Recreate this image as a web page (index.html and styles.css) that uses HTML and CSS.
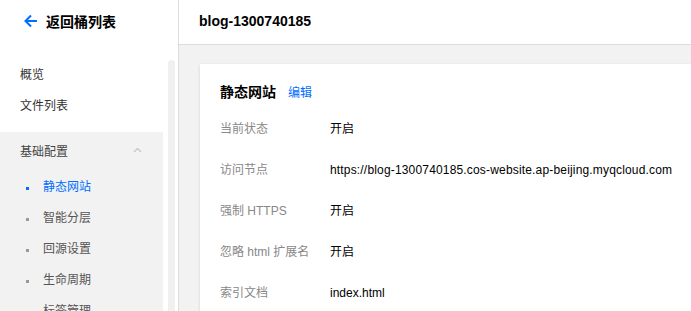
FILE: index.html
```html
<!doctype html>
<html lang="zh-CN">
  <head>
    <meta charset="UTF-8" />
    <title>blog-1300740185 - 静态网站</title>
    <link rel="stylesheet" href="styles.css">
  </head>
  <body>
    <!-- Sidebar -->
    <aside class="sidebar">
      <div class="side-head">
        <a class="back-link" href="#">
          <svg class="back-icon" width="14" height="14" viewBox="0 0 14 14" fill="none">
            <path d="M13 7H2M7 1.5L1.5 7L7 12.5" stroke="#006eff" stroke-width="2" stroke-linejoin="miter"/>
          </svg>
          <span>返回桶列表</span>
        </a>
      </div>
      <div class="side-body">
        <nav class="menu">
          <div class="menu-item">概览</div>
          <div class="menu-item">文件列表</div>
          <div class="menu-group">
            <div class="group-head">
              <span>基础配置</span>
              <svg class="chevron" width="9" height="6" viewBox="0 0 9 6" fill="none">
                <path d="M1 5L4.5 1.5L8 5" stroke="#c4c4c4" stroke-width="1.2"/>
              </svg>
            </div>
            <div class="sub-list">
              <div class="sub-item active">静态网站</div>
              <div class="sub-item">智能分层</div>
              <div class="sub-item">回源设置</div>
              <div class="sub-item">生命周期</div>
              <div class="sub-item">标签管理</div>
            </div>
          </div>
        </nav>
        <div class="scroll-track"></div>
      </div>
    </aside>

    <!-- Main -->
    <main class="main">
      <header class="main-head">blog-1300740185</header>
      <section class="content">
        <div class="card">
          <div class="card-title">
            <h2>静态网站</h2>
            <a class="edit-link" href="#">编辑</a>
          </div>
          <dl class="info">
            <div class="row"><dt>当前状态</dt><dd>开启</dd></div>
            <div class="row"><dt>访问节点</dt><dd class="url">https://blog-1300740185.cos-website.ap-beijing.myqcloud.com</dd></div>
            <div class="row"><dt>强制 HTTPS</dt><dd>开启</dd></div>
            <div class="row"><dt>忽略 html 扩展名</dt><dd>开启</dd></div>
            <div class="row"><dt>索引文档</dt><dd>index.html</dd></div>
          </dl>
        </div>
      </section>
    </main>
  </body>
</html>
```

FILE: styles.css
```css
/* Base */
html, body {
  margin: 0;
  height: 100%;
}

body {
  display: flex;
  overflow: hidden;
  font-family: "Liberation Sans", "Noto Sans CJK SC", sans-serif;
  font-size: 12px;
  color: #333;
  background: #fff;
}

a {
  text-decoration: none;
}

/* Sidebar */
.sidebar {
  width: 178px;
  flex-shrink: 0;
  border-right: 1px solid #dcdcdc;
  display: flex;
  flex-direction: column;
  background: #fff;
}

.side-head {
  height: 44px;
  flex-shrink: 0;
  display: flex;
  align-items: center;
  padding-left: 24px;
  padding-bottom: 2px;
  box-sizing: border-box;
}

.back-link {
  display: flex;
  align-items: center;
  gap: 8px;
  color: #000;
  font-size: 14px;
  font-weight: bold;
}

.side-body {
  flex: 1;
  min-height: 0;
  display: flex;
  padding-top: 16px;
}

.menu {
  width: 163px;
  flex-shrink: 0;
}

.scroll-track {
  width: 7px;
  margin-left: 5px;
  background: #f0f0f0;
  border-radius: 4px 4px 0 0;
}

.menu-item {
  height: 31px;
  line-height: 31px;
  padding-left: 20px;
  color: #333;
}

.menu-group {
  margin-top: 10px;
  background: #f2f2f2;
}

.group-head {
  height: 36px;
  display: flex;
  align-items: center;
  justify-content: space-between;
  padding: 0 21px 0 20px;
  color: #444;
}

.sub-list {
  padding-top: 4px;
}

.sub-item {
  position: relative;
  height: 31px;
  line-height: 31px;
  padding-left: 43px;
  color: #555;
}

.sub-item::before {
  content: "";
  position: absolute;
  left: 26px;
  top: 15px;
  width: 3px;
  height: 3px;
  background: #999;
}

.sub-item.active {
  color: #006eff;
}

.sub-item.active::before {
  background: #006eff;
}

/* Main */
.main {
  flex: 1;
  display: flex;
  flex-direction: column;
  min-width: 0;
  background: #f2f2f2;
}

.main-head {
  height: 44px;
  flex-shrink: 0;
  line-height: 42px;
  padding-left: 20px;
  background: #fff;
  border-bottom: 1px solid #dcdcdc;
  font-size: 14px;
  font-weight: bold;
  color: #000;
}

.content {
  flex: 1;
  min-height: 0;
  padding: 19px 0 0 21px;
}

.card {
  background: #fff;
  box-shadow: 0 1px 3px rgba(0, 0, 0, 0.12);
  padding: 19px 0 20px 20px;
  min-height: 300px;
}

.card-title {
  display: flex;
  align-items: center;
  gap: 12px;
  height: 16px;
}

.card-title h2 {
  margin: 0;
  font-size: 14px;
  font-weight: bold;
  color: #000;
}

.edit-link {
  color: #006eff;
  font-size: 12px;
}

.info {
  margin: 21px 0 0;
  display: flex;
  flex-direction: column;
  gap: 23px;
}

.row {
  display: flex;
  line-height: 18px;
}

.row dt {
  width: 110px;
  flex-shrink: 0;
  color: #888;
}

.row dd {
  margin: 0;
  color: #000;
  white-space: nowrap;
}

.row .url {
  letter-spacing: 0.17px;
}
```
